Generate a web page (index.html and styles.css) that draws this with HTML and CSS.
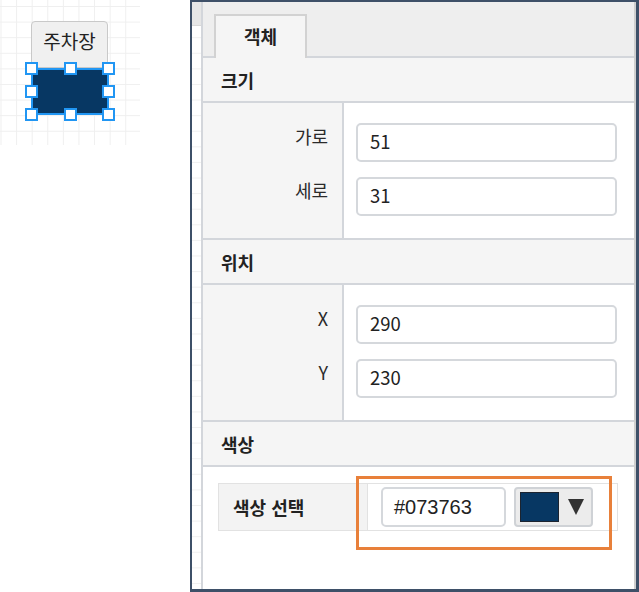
FILE: index.html
```html
<!DOCTYPE html>
<html lang="ko">
<head>
<meta charset="utf-8">
<link rel="stylesheet" href="styles.css">
</head>
<body>
<div class="app">
  <div class="canvas">
    <div class="grid"></div>
    <div class="node">
      <div class="node-label">주차장</div>
      <div class="node-shape">
        <span class="h h-tl"></span><span class="h h-tc"></span><span class="h h-tr"></span>
        <span class="h h-ml"></span><span class="h h-mr"></span>
        <span class="h h-bl"></span><span class="h h-bc"></span><span class="h h-br"></span>
      </div>
    </div>
  </div>
  <div class="panel">
    <div class="gutter"></div>
    <div class="main">
      <div class="tabbar"><div class="tab">객체</div></div>

      <div class="sec-head">크기</div>
      <div class="form">
        <div class="labels">
          <div class="lbl">가로</div>
          <div class="lbl">세로</div>
        </div>
        <div class="fields">
          <div class="input">51</div>
          <div class="input">31</div>
        </div>
      </div>

      <div class="sec-head">위치</div>
      <div class="form">
        <div class="labels">
          <div class="lbl">X</div>
          <div class="lbl">Y</div>
        </div>
        <div class="fields">
          <div class="input">290</div>
          <div class="input">230</div>
        </div>
      </div>

      <div class="sec-head">색상</div>
      <div class="color-body">
        <div class="crow">
          <div class="ccell-label">색상 선택</div>
          <div class="ccell-value">
            <div class="hex">#073763</div>
            <div class="picker"><span class="swatch"></span><span class="caret"></span></div>
          </div>
        </div>
        <div class="highlight"></div>
      </div>
    </div>
  </div>
</div>
</body>
</html>
```

FILE: styles.css
```css
* { box-sizing: border-box; }
html, body { margin: 0; padding: 0; background: #fff; }
body {
  font-family: "Noto Sans CJK KR", "Noto Sans", sans-serif;
  font-size: 18px;
  color: #222;
}
.app {
  display: flex;
  width: 639px;
  height: 592px;
}
.canvas {
  position: relative;
  width: 190px;
  flex: none;
}
.grid {
  width: 140px;
  height: 145px;
  background-color: #fff;
  background-image:
    linear-gradient(to right, #efefef 1px, transparent 1px),
    linear-gradient(to bottom, #efefef 1px, transparent 1px);
  background-size: 15.6px 15.6px;
  background-position: 0.5px 6px;
}
.node {
  position: absolute;
  left: 0; top: 0;
}
.node-label {
  position: absolute;
  left: 31px; top: 21px;
  width: 77px; height: 47px;
  background: #f0f0f0;
  border: 1px solid #c9c9c9;
  border-radius: 4px;
  text-align: center;
  line-height: 38px;
  font-size: 19px;
  color: #222;
}
.node-shape {
  position: absolute;
  left: 31px; top: 68px;
  width: 78px; height: 47px;
  background: #073763;
  border: 2px solid #2196f3;
}
.h {
  position: absolute;
  width: 13px; height: 13px;
  background: #fff;
  border: 2px solid #2196f3;
}
.h-tl { left: -8px; top: -8px; }
.h-tc { left: 31px; top: -8px; }
.h-tr { right: -8px; top: -8px; }
.h-ml { left: -8px; top: 15px; }
.h-mr { right: -8px; top: 15px; }
.h-bl { left: -8px; bottom: -8px; }
.h-bc { left: 31px; bottom: -8px; }
.h-br { right: -8px; bottom: -8px; }

.panel {
  flex: 1;
  display: flex;
  border-style: solid;
  border-color: #3e5068;
  border-width: 2px 3px 3px 2px;
}
.gutter {
  width: 9px;
  flex: none;
  background-color: #fff;
  background-image:
    linear-gradient(to bottom, #e6e6e6 0, #e6e6e6 23px, #d8d8d8 23px, #d8d8d8 24px, transparent 24px),
    linear-gradient(to bottom, #f0f0f0 1px, transparent 1px);
  background-size: 100% 100%, 100% 15.6px;
  background-repeat: no-repeat, repeat;
  background-position: 0 0, 0 4px;
}
.main {
  flex: 1;
  display: flex;
  flex-direction: column;
  border-left: 2px solid #d3d6db;
  border-right: 2px solid #cfcfcf;
  background: #fff;
}
.tabbar {
  height: 56px;
  flex: none;
  background: #eeeeee;
  border-bottom: 2px solid #d3d6db;
  padding: 13px 0 0 11px;
  display: flex;
  align-items: flex-end;
}
.tab {
  width: 93px;
  height: 44px;
  margin-bottom: -2px;
  background: #f5f5f5;
  border: 2px solid #d2d2d2;
  border-bottom: none;
  text-align: center;
  font-weight: bold;
  font-size: 18px;
  line-height: 40px;
  color: #222;
}
.sec-head {
  height: 45px;
  flex: none;
  background: #f5f5f5;
  border-bottom: 2px solid #d3d6db;
  padding-left: 18px;
  display: flex;
  align-items: center;
  font-weight: bold;
  font-size: 18px;
  color: #222;
}
.form {
  display: flex;
  height: 137px;
  flex: none;
  border-bottom: 2px solid #d3d6db;
}
.labels {
  width: 141px;
  flex: none;
  background: #f5f5f5;
  border-right: 2px solid #d3d6db;
  padding: 13px 14px 0 0;
  display: flex;
  flex-direction: column;
  gap: 15px;
}
.lbl {
  height: 39px;
  display: flex;
  align-items: center;
  justify-content: flex-end;
  font-size: 18px;
  color: #2a2a2a;
}
.fields {
  flex: 1;
  padding: 20px 17px 0 12px;
  display: flex;
  flex-direction: column;
  gap: 15px;
}
.input {
  height: 39px;
  border: 2px solid #d5d8dc;
  border-radius: 5px;
  background: #fff;
  padding-left: 12px;
  padding-bottom: 4px;
  display: flex;
  align-items: center;
  font-size: 18.5px;
  color: #222;
}
.color-body {
  position: relative;
  flex: 1;
  background: #fff;
  padding: 16px 0 0 15px;
}
.crow {
  display: flex;
  width: 400px;
  height: 48px;
  border: 1px solid #e2e2e2;
}
.ccell-label {
  width: 149px;
  flex: none;
  background: #f3f3f3;
  border-right: 1px solid #e2e2e2;
  padding-left: 14px;
  display: flex;
  align-items: center;
  font-weight: bold;
  font-size: 18px;
  color: #222;
}
.ccell-value {
  flex: 1;
  display: flex;
  align-items: center;
  padding-left: 13px;
  gap: 8px;
}
.hex {
  width: 125px;
  height: 40px;
  border: 2px solid #d5d8dc;
  border-radius: 5px;
  padding-left: 11px;
  display: flex;
  align-items: center;
  font-family: "Liberation Sans", Arial, sans-serif;
  font-size: 20px;
  color: #222;
}
.picker {
  width: 79px;
  height: 40px;
  background: #ececec;
  border: 2px solid #cfd2d6;
  border-radius: 4px;
  display: flex;
  align-items: center;
  padding-left: 4px;
  gap: 9px;
}
.swatch {
  width: 39px;
  height: 30px;
  background: #073763;
  border: 1px solid #1c2430;
}
.caret {
  width: 0; height: 0;
  border-left: 8px solid transparent;
  border-right: 8px solid transparent;
  border-top: 16px solid #333;
}
.highlight {
  position: absolute;
  left: 153px;
  top: 9px;
  width: 256px;
  height: 74px;
  border: 3px solid #e8803a;
}
```
